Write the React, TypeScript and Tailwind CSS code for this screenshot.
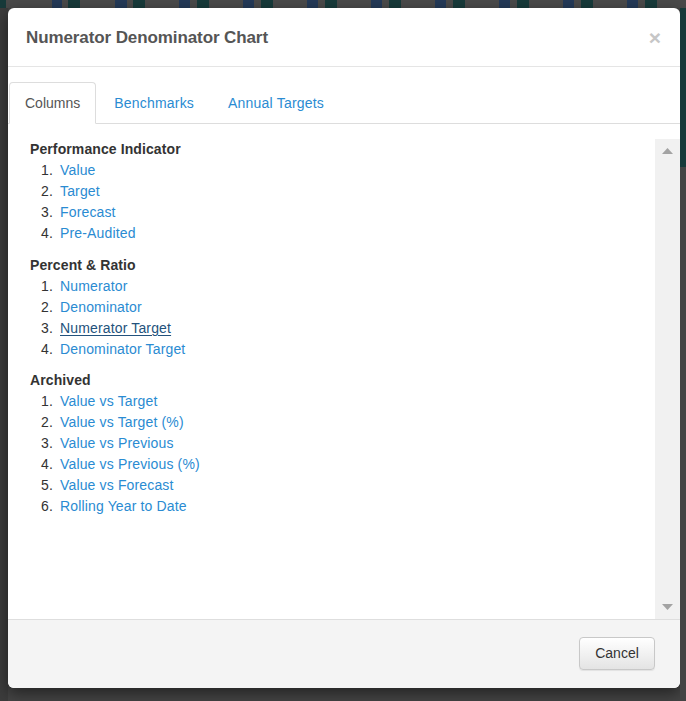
import React from "react";

const groups: { title: string; items: string[]; mb: string }[] = [
  { title: "Performance Indicator", items: ["Value", "Target", "Forecast", "Pre-Audited"], mb: "mb-[11px]" },
  { title: "Percent & Ratio", items: ["Numerator", "Denominator", "Numerator Target", "Denominator Target"], mb: "mb-[10px]" },
  {
    title: "Archived",
    items: ["Value vs Target", "Value vs Target (%)", "Value vs Previous", "Value vs Previous (%)", "Value vs Forecast", "Rolling Year to Date"],
    mb: "mb-0",
  },
];

const stripBlocks = [
  "bg-[#173a3a] w-[6px]",
  "bg-[#4a4a4a] w-[46px]",
  "bg-[#243a58] w-[10px]",
  "bg-[#4a4a4a] w-[6px]",
  "bg-[#173a3a] w-[12px]",
  "bg-[#4a4a4a] w-[35px]",
  "bg-[#243a58] w-[12px]",
  "bg-[#4a4a4a] w-[6px]",
  "bg-[#173a3a] w-[12px]",
  "bg-[#4a4a4a] w-[34px]",
  "bg-[#243a58] w-[11px]",
  "bg-[#4a4a4a] w-[7px]",
  "bg-[#173a3a] w-[12px]",
  "bg-[#4a4a4a] w-[34px]",
  "bg-[#243a58] w-[11px]",
  "bg-[#4a4a4a] w-[7px]",
  "bg-[#173a3a] w-[12px]",
  "bg-[#4a4a4a] w-[34px]",
  "bg-[#243a58] w-[11px]",
  "bg-[#4a4a4a] w-[7px]",
  "bg-[#173a3a] w-[12px]",
  "bg-[#4a4a4a] w-[34px]",
  "bg-[#243a58] w-[11px]",
  "bg-[#4a4a4a] w-[7px]",
  "bg-[#173a3a] w-[12px]",
  "bg-[#4a4a4a] w-[34px]",
  "bg-[#243a58] w-[11px]",
  "bg-[#4a4a4a] w-[7px]",
  "bg-[#173a3a] w-[12px]",
  "bg-[#4a4a4a] w-[34px]",
  "bg-[#243a58] w-[11px]",
  "bg-[#4a4a4a] w-[7px]",
  "bg-[#173a3a] w-[12px]",
  "bg-[#4a4a4a] w-[34px]",
  "bg-[#243a58] w-[11px]",
  "bg-[#4a4a4a] w-[7px]",
  "bg-[#173a3a] w-[12px]",
  "bg-[#4a4a4a] w-[34px]",
  "bg-[#243a58] w-[11px]",
  "bg-[#4a4a4a] w-[7px]",
  "bg-[#173a3a] w-[12px]",
  "bg-[#4a4a4a] w-[40px]",
];

export default function App() {
  return (
    <div className="w-[686px] h-[701px] overflow-hidden bg-[#444444] flex flex-col font-['Liberation_Sans',Arial,sans-serif]">
      <div className="h-[8px] flex shrink-0">
        {stripBlocks.map((c, i) => (
          <div key={i} className={"h-full shrink-0 " + c} />
        ))}
      </div>
      <div className="flex">
        <div className="w-[8px] bg-[#3c3c3c] h-[693px]" />
        <div className="w-[672px] h-[680px] bg-white rounded-[6px] shadow-[0_5px_15px_rgba(0,0,0,0.5)] flex flex-col overflow-hidden">
          {/* header */}
          <div className="h-[59px] shrink-0 border-b border-[#e5e5e5] flex items-center justify-between pl-[18px] pr-[19px]">
            <div className="text-[17px] font-bold text-[#555555] leading-none tracking-[-0.1px]">Numerator Denominator Chart</div>
            <div className="text-[21px] font-bold text-[#c6c6c6] leading-none">×</div>
          </div>
          {/* tabs */}
          <div className="pt-[15px] shrink-0">
            <div className="flex h-[42px] border-b border-[#dddddd] pl-[1px]">
              <div className="h-[42px] px-[15px] flex items-center border border-[#dddddd] border-b-transparent rounded-t-[4px] bg-white text-[14px] text-[#555555] -mb-[1px] mr-[3px]">
                Columns
              </div>
              <div className="h-[41px] px-[15px] flex items-center pt-[1px] text-[14px] text-[#2a8bd2] mr-[4px] tracking-[0.2px]">Benchmarks</div>
              <div className="h-[41px] px-[15px] flex items-center pt-[1px] text-[14px] text-[#2a8bd2] tracking-[0.2px]">Annual Targets</div>
            </div>
          </div>
          {/* scroll area */}
          <div className="mt-[15px] h-[480px] shrink-0 flex">
            <div className="flex-1 pl-[22px]">
              {groups.map((g) => (
                <div key={g.title} className={g.mb}>
                  <div className="text-[14px] leading-[21px] font-bold text-[#333333] tracking-[0.1px]">{g.title}</div>
                  {g.items.map((it, i) => (
                    <div key={it} className="flex text-[14px] leading-[21px] tracking-[0.15px]">
                      <span className="w-[23px] text-right text-[#333333]">{i + 1}.</span>
                      <span
                        className={
                          "ml-[7px] " +
                          (it === "Numerator Target" ? "text-[#23527c] underline underline-offset-[2px]" : "text-[#2a8bd2]")
                        }
                      >
                        {it}
                      </span>
                    </div>
                  ))}
                </div>
              ))}
            </div>
            <div className="w-[25px] bg-[#f1f1f1] flex flex-col justify-between items-center py-[9px]">
              <svg width="11" height="6" viewBox="0 0 11 6">
                <polygon points="5.5,0 11,6 0,6" fill="#a3a3a3" />
              </svg>
              <svg width="11" height="6" viewBox="0 0 11 6">
                <polygon points="0,0 11,0 5.5,6" fill="#a3a3a3" />
              </svg>
            </div>
          </div>
          {/* footer */}
          <div className="h-[69px] shrink-0 border-t border-[#dedede] bg-[#f4f4f4] flex items-center justify-end pr-[25px]">
            <button className="w-[76px] h-[33px] -mt-[1px] rounded-[4px] border border-[#c8c8c8] bg-linear-to-b from-white to-[#e4e4e4] text-[14px] text-[#333333] shadow-[inset_0_1px_0_rgba(255,255,255,0.15),0_1px_1px_rgba(0,0,0,0.075)]">
              Cancel
            </button>
          </div>
        </div>
        <div className="w-[6px] flex flex-col">
          <div className="h-[159px] bg-[#173a3a]" />
          <div className="flex-1 bg-[#444444]" />
        </div>
      </div>
    </div>
  );
}
